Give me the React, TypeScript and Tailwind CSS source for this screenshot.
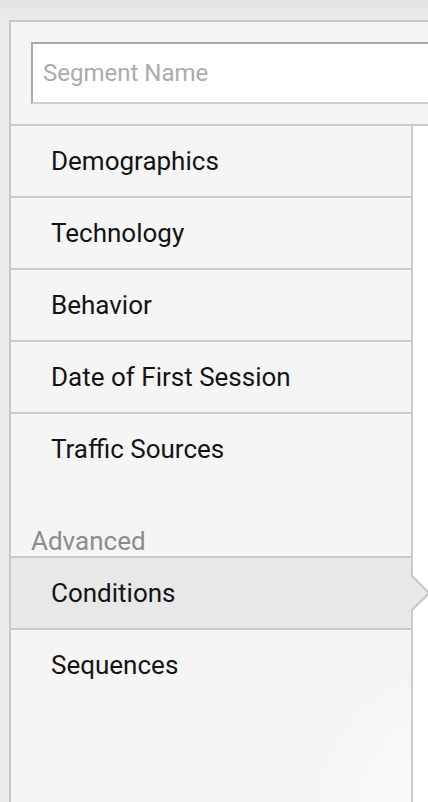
import React from 'react';

const items = ['Demographics', 'Technology', 'Behavior', 'Date of First Session', 'Traffic Sources'];

const NavItem: React.FC<{ label: string; last?: boolean }> = ({ label, last }) => (
  <div
    className={`flex items-center pl-[40px] text-[26px] text-[#141414] ${
      last ? 'h-[70px]' : 'h-[72px] border-b-2 border-[#cbcbcb]'
    }`}
  >
    {label}
  </div>
);

export default function App() {
  return (
    <div
      className="w-[428px] h-[802px] overflow-hidden bg-[linear-gradient(to_bottom,#e3e3e3_0px,#ebebeb_20px)] pt-[20px] pl-[9px]"
      style={{ fontFamily: 'Roboto, "Liberation Sans", sans-serif' }}
    >
      <div className="w-[460px] h-[800px] border-t-2 border-l-2 border-[#c8c8c8] bg-[#f5f5f5] flex flex-col">
        {/* Segment name */}
        <div className="pt-[20px] pl-[20px] pb-[20px] border-b-2 border-[#cbcbcb]">
          <input
            placeholder="Segment Name"
            className="w-[440px] h-[62px] bg-white border-2 border-[#cdcdcd] border-t-[#a9a9a9] border-l-[#a9a9a9] pl-[10px] text-[24px] text-[#222] placeholder:text-[#ababab] outline-none"
          />
        </div>

        {/* Body */}
        <div className="flex flex-1 bg-[radial-gradient(circle_at_100%_100%,#fefefe_0px,#f5f5f5_160px)]">
          <div className="w-[402px] border-r-2 border-[#cbcbcb] flex flex-col">
            {items.map((label, i) => (
              <NavItem key={label} label={label} last={i === items.length - 1} />
            ))}

            <div className="h-[72px] flex items-end pl-[20px] text-[26px] leading-[30px] text-[#8c8c8c]">
              Advanced
            </div>

            <div className="relative h-[74px] flex items-center pl-[40px] text-[26px] text-[#141414] bg-[#e8e8e8] border-y-2 border-[#cbcbcb]">
              Conditions
              <div className="absolute left-[388px] top-1/2 -translate-y-1/2 w-[26px] h-[26px] rotate-45 bg-[#e8e8e8] border-t-2 border-r-2 border-[#c6c6c6] z-10" />
            </div>

            <NavItem label="Sequences" last />
          </div>
          <div className="flex-1 bg-white" />
        </div>
      </div>
    </div>
  );
}
